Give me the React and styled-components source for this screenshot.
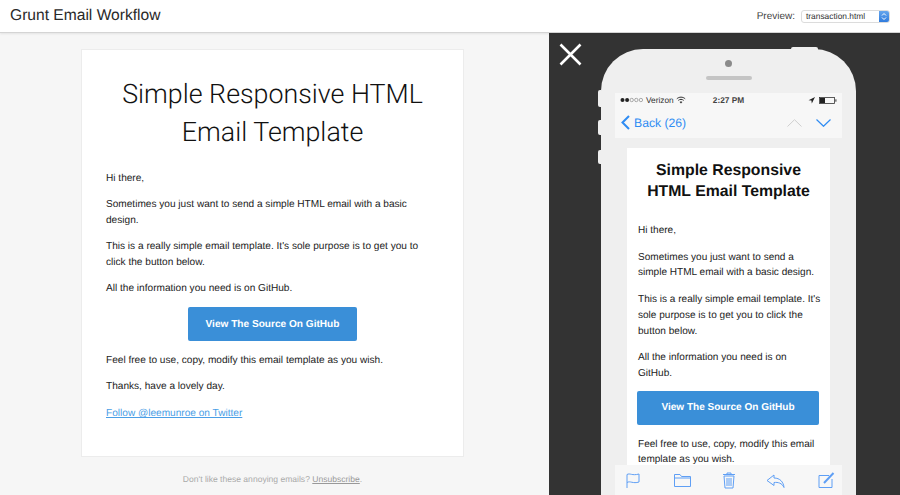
import React from "react";
import styled, { createGlobalStyle } from "styled-components";

const Global = createGlobalStyle`
  html, body { margin: 0; padding: 0; height: 495px; overflow: hidden; }
  body { font-family: "Liberation Sans", Arial, sans-serif; color: #222; -webkit-font-smoothing: antialiased; text-rendering: geometricPrecision; }
  #root { height: 495px; }
`;

const Page = styled.div`
  width: 900px; height: 495px; display: flex; flex-direction: column; overflow: hidden;
`;
const Header = styled.header`
  height: 32px; flex: none; display: flex; align-items: center; justify-content: space-between;
  padding: 0 10px; background: #fff; border-bottom: 1px solid #d4d4d4; box-shadow: 0 1px 2px rgba(0,0,0,.08);
  position: relative; z-index: 2;
`;
const Title = styled.h1`
  margin: 0; font-size: 15.6px; font-weight: 400; color: #2a2a2a;
`;
const PreviewGroup = styled.div`
  display: flex; align-items: center; gap: 6px; font-size: 10px; color: #444;
`;
const SelectBox = styled.div`
  width: 89px; height: 13px; display: flex; align-items: center; justify-content: space-between;
  border: 1px solid #dcdcdc; border-radius: 3px; font-size: 8.4px; color: #333; padding-left: 4px;
  overflow: hidden; box-sizing: border-box;
`;
const SelectCaret = styled.span`
  width: 10px; height: 13px; background: linear-gradient(#6aa9ee, #2b78dc); display: flex; align-items: center; justify-content: center;
`;
const Main = styled.main`
  flex: 1; display: flex; min-height: 0;
`;
const LeftPane = styled.section`
  width: 549px; flex: none; background: #f6f6f6; padding: 16px 0 0 81px; box-sizing: border-box;
`;
const Card = styled.article`
  width: 383px; height: 408px; box-sizing: border-box; background: #fff; border: 1px solid #ececec;
  padding: 25px 24px 0;
`;
const BigHeading = styled.h2`
  margin: 0 0 20px; font-family: Roboto, "Liberation Sans", sans-serif; font-weight: 300; font-size: 26.8px; line-height: 38px; text-align: center; color: #111;
`;
const Para = styled.p`
  margin: 0 0 10px; font-size: 10.1px; line-height: 16px; color: #222;
`;
const ParaTall = styled(Para)`
  margin-bottom: 11px;
`;
const CtaRow = styled.div`
  display: flex; justify-content: center; margin: 1px 0 12px;
`;
const Cta = styled.a`
  width: 169px; height: 34px; display: flex; align-items: center; justify-content: center;
  background: #3a8fd8; border-radius: 2px; color: #fff; font-size: 10.1px; font-weight: 700;
`;
const TextLink = styled.a`
  color: #4a9ee6; text-decoration: underline;
`;
const FootNote = styled.p`
  margin: 17px 0 0; width: 383px; text-align: center; font-size: 8.56px; color: #aaa;
  a { color: #999; text-decoration: underline; }
`;
const RightPane = styled.section`
  flex: 1; background: #333; position: relative; overflow: hidden; padding: 16px 0 0 52px;
`;
const Close = styled.svg`
  position: absolute; left: 10px; top: 10px; width: 23px; height: 23px;
`;
const Phone = styled.div`
  width: 255px; height: 600px; background: #efefef; border-radius: 42px 42px 0 0; position: relative;
  padding: 44px 14px 0; box-sizing: border-box;
`;
const TopButton = styled.span`
  position: absolute; top: -2px; left: 190px; width: 27px; height: 4px; background: #efefef; border-radius: 2px 2px 0 0;
`;
const SideButton = styled.span`
  position: absolute; left: -3px; top: ${p => p.$top}px; width: 3px; height: ${p => p.$h}px; background: #efefef; border-radius: 2px 0 0 2px;
`;
const Camera = styled.span`
  position: absolute; top: 11px; left: 124px; width: 7px; height: 7px; border-radius: 50%; background: #8a8a8a;
`;
const Speaker = styled.span`
  position: absolute; top: 27px; left: 105px; width: 46px; height: 4px; border-radius: 2px; background: #c4c4c4;
`;
const Screen = styled.div`
  width: 227px; height: 402px; background: #efefef; display: flex; flex-direction: column; position: relative; overflow: hidden;
`;
const StatusBar = styled.div`
  height: 14px; flex: none; background: #f7f7f7; padding: 0 5px; display: grid; grid-template-columns: 1fr auto 1fr; align-items: center;
  font-size: 8.3px; color: #333; font-weight: 400;
`;
const StatusLeft = styled.div`
  display: flex; align-items: center; gap: 2px;
`;
const StatusRight = styled.div`
  display: flex; align-items: center; justify-content: flex-end; gap: 4px;
`;
const Time = styled.span`
  font-weight: 700; color: #444;
`;
const NavBar = styled.div`
  height: 31px; flex: none; background: #f7f7f7; display: flex; align-items: center; justify-content: space-between; padding: 0 11px 0 6px;
`;
const BackLink = styled.div`
  display: flex; align-items: center; gap: 4px; color: #2f8cf3; font-size: 12.2px;
`;
const NavArrows = styled.div`
  display: flex; align-items: center; gap: 14px;
`;
const MailBody = styled.div`
  flex: 1; padding: 10px 12px 0; min-height: 0; overflow: hidden;
`;
const MailCard = styled.article`
  background: #fff; padding: 12px 8px 0 11px; height: 340px; overflow: hidden; box-sizing: border-box;
`;
const SmallHeading = styled.h3`
  margin: 0 0 21px -3px; width: 187px; font-size: 15.8px; font-weight: 700; line-height: 21px; text-align: center; color: #111;
`;
const MobilePara = styled.p`
  margin: 0 0 ${p => p.$mb ?? 11}px; font-size: 10.05px; line-height: 15.7px; color: #222;
`;
const MobileCta = styled.a`
  width: 182px; margin: 0 0 12px -1px; height: 34px; display: flex; align-items: center; justify-content: center;
  background: #3a8fd8; border-radius: 2px; color: #fff; font-size: 10.05px; font-weight: 700;
`;
const Toolbar = styled.div`
  position: absolute; left: 0; right: 0; top: 372px; height: 30px; background: #f7f7f7; display: flex; align-items: flex-start;
  padding: 7px 0 0 11px; box-sizing: border-box;
`;
const ToolSlot = styled.span`
  display: block; margin-left: ${p => p.$gap}px; height: 17px;
`;

const ToolIcon = ({ children, w = 18, gap = 0 }) => (
  <ToolSlot $gap={gap}>
    <svg width={w} height="17" viewBox={`0 0 ${w} 17`} fill="none" stroke="#5f9ff5" strokeWidth="1">{children}</svg>
  </ToolSlot>
);

const Dots = () => (
  <svg width="24" height="6" viewBox="0 0 24 6">
    {[0, 1].map(i => <circle key={i} cx={2.5 + i * 4.6} cy="3" r="2" fill="#222" />)}
    {[2, 3, 4].map(i => <circle key={i} cx={2.5 + i * 4.6} cy="3" r="1.7" fill="none" stroke="#777" strokeWidth=".6" />)}
  </svg>
);

export default function App() {
  return (
    <Page>
      <Global />
      <Header>
        <Title>Grunt Email Workflow</Title>
        <PreviewGroup>
          Preview:
          <SelectBox>
            transaction.html
            <SelectCaret>
              <svg width="6" height="9" viewBox="0 0 6 9" fill="none" stroke="#fff" strokeWidth="1"><path d="M1 3.5 3 1.5 5 3.5M1 5.5 3 7.5 5 5.5" /></svg>
            </SelectCaret>
          </SelectBox>
        </PreviewGroup>
      </Header>
      <Main>
        <LeftPane>
          <Card>
            <BigHeading>Simple Responsive HTML Email Template</BigHeading>
            <Para>Hi there,</Para>
            <Para>Sometimes you just want to send a simple HTML email with a basic design.</Para>
            <Para>This is a really simple email template. It's sole purpose is to get you to click the button below.</Para>
            <Para>All the information you need is on GitHub.</Para>
            <CtaRow><Cta>View The Source On GitHub</Cta></CtaRow>
            <Para>Feel free to use, copy, modify this email template as you wish.</Para>
            <ParaTall>Thanks, have a lovely day.</ParaTall>
            <Para><TextLink>Follow @leemunroe on Twitter</TextLink></Para>
          </Card>
          <FootNote>Don't like these annoying emails? <a>Unsubscribe</a>.</FootNote>
        </LeftPane>
        <RightPane>
          <Close viewBox="0 0 23 23" fill="none" stroke="#fff" strokeWidth="2.6"><path d="M1.5 1.5 21.5 21.5M21.5 1.5 1.5 21.5" /></Close>
          <Phone>
            <TopButton />
            <SideButton $top={41} $h={17} />
            <SideButton $top={71} $h={15} />
            <SideButton $top={101} $h={14} />
            <Camera />
            <Speaker />
            <Screen>
              <StatusBar>
                <StatusLeft>
                  <Dots />
                  <span>Verizon</span>
                  <svg width="10" height="8" viewBox="0 0 10 8" fill="none" stroke="#333" strokeWidth="1"><path d="M.8 2.8C3.2.6 6.8.6 9.2 2.8M2.3 4.4C3.9 3 6.1 3 7.7 4.4" /><path d="M5 7.6 3.6 5.9C4.4 5.3 5.6 5.3 6.4 5.9Z" fill="#333" stroke="none" /></svg>
                </StatusLeft>
                <Time>2:27 PM</Time>
                <StatusRight>
                  <svg width="7" height="7" viewBox="0 0 7 7"><path d="M7 0 .5 3.2 3.4 3.6 3.8 6.6Z" fill="#222" /></svg>
                  <svg width="18" height="7" viewBox="0 0 18 7"><rect x=".5" y=".5" width="15" height="6" fill="none" stroke="#333" strokeWidth=".8" /><rect x="1" y="1" width="5" height="5" fill="#222" /><rect x="16.4" y="2.3" width="1" height="2.4" fill="#333" /></svg>
                </StatusRight>
              </StatusBar>
              <NavBar>
                <BackLink>
                  <svg width="9" height="15" viewBox="0 0 9 15" fill="none" stroke="#2f8cf3" strokeWidth="2"><path d="M8 1 1.5 7.5 8 14" /></svg>
                  Back (26)
                </BackLink>
                <NavArrows>
                  <svg width="15" height="8" viewBox="0 0 15 8" fill="none" stroke="#cfcfcf" strokeWidth="1"><path d="M.5 7.5 7.5 .7 14.500 7.500" /></svg>
                  <svg width="15" height="8" viewBox="0 0 15 8" fill="none" stroke="#2f8cf3" strokeWidth="1.200"><path d="M.5 .5 7.5 7.300 14.500 .5" /></svg>
                </NavArrows>
              </NavBar>
              <MailBody>
                <MailCard>
                  <SmallHeading>Simple Responsive<br />HTML Email Template</SmallHeading>
                  <MobilePara>Hi there,</MobilePara>
                  <MobilePara>Sometimes you just want to send a simple HTML email with a basic design.</MobilePara>
                  <MobilePara>This is a really simple email template. It's sole purpose is to get you to click the button below.</MobilePara>
                  <MobilePara $mb={9}>All the information you need is on GitHub.</MobilePara>
                  <MobileCta>View The Source On GitHub</MobileCta>
                  <MobilePara>Feel free to use, copy, modify this email template as you wish.</MobilePara>
                </MailCard>
              </MailBody>
              <Toolbar>
                <ToolIcon w={14}><path d="M1 16V2.500C4 .8 6 4 13 2V10C7 12 4 8.500 1 10.500" /></ToolIcon>
                <ToolIcon w={17} gap={34}><path d="M.5 14.500V2.500H6L7.500 4.500H16.500V14.500ZM.5 6H16.500" /></ToolIcon>
                <ToolIcon w={14} gap={31}><path d="M1 2.500H13M5 2.500V1H9V2.500M2 4 3 16H11L12 4ZM5 6V14M7 6V14M9 6V14" /></ToolIcon>
                <ToolIcon w={19} gap={30}><path d="M8 3 1 8.500 8 13.500V10.500C12 10 16 11 18 15.500 17.500 10 14 6 8 6Z" /></ToolIcon>
                <ToolIcon w={17} gap={33}><path d="M11 3.500H1V15.500H14V7" /><path d="M6 11 15.500 1" strokeWidth="2" /></ToolIcon>
              </Toolbar>
            </Screen>
          </Phone>
        </RightPane>
      </Main>
    </Page>
  );
}
